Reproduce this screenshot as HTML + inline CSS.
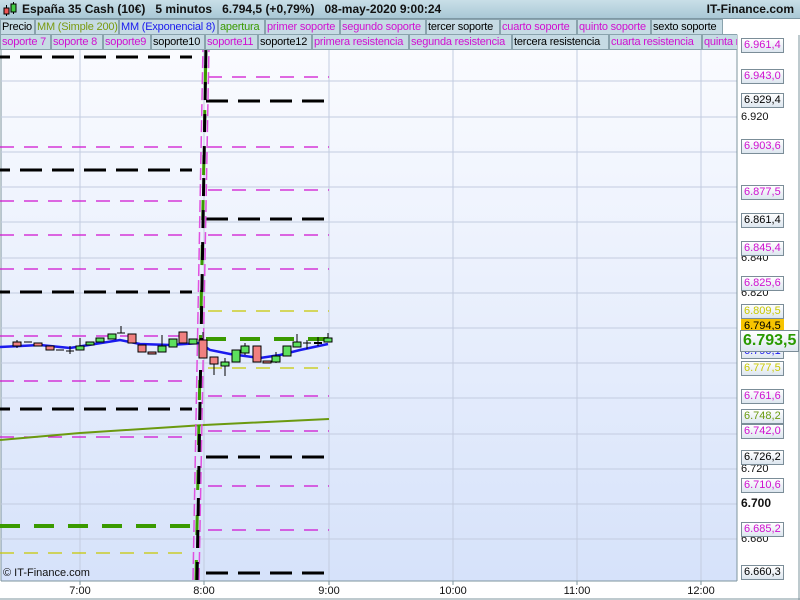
<!DOCTYPE html>
<html><head><meta charset="utf-8"><style>
*{margin:0;padding:0;box-sizing:border-box}
body{width:800px;height:600px;overflow:hidden;background:#fff;font-family:"Liberation Sans",sans-serif;position:relative}
#hdr{position:absolute;left:0;top:0;width:800px;height:19px;background:linear-gradient(#c9dfe8,#a9c8d6);border-bottom:1px solid #7e98a4;font-size:12px;font-weight:bold;color:#111}
.tabs{position:absolute;left:0;height:16px;font-size:11px;white-space:nowrap}
.tab{position:absolute;top:0;height:16px;background:#c6dbe4;border:1px solid #8aa3ad;line-height:14px;padding-left:1px;overflow:hidden;letter-spacing:-0.2px}
.lab{position:absolute;left:741px;font-size:11px;height:15px;line-height:13px;padding:0 2px;background:linear-gradient(#fff,#dde6ef);border:1px solid #7b8d98;white-space:nowrap}
.pl{position:absolute;left:741px;font-size:11px;height:14px;line-height:14px;color:#111}
.tm{position:absolute;top:585px;font-size:11px;color:#111;width:40px;text-align:center}
</style></head><body>
<div id="hdr">
<svg style="position:absolute;left:3px;top:2px" width="14" height="15"><line x1="3.5" y1="3" x2="3.5" y2="14" stroke="#000"/><rect x="1" y="6" width="5" height="6" fill="#e55" stroke="#000"/><line x1="10.5" y1="0" x2="10.5" y2="12" stroke="#000"/><rect x="8" y="2" width="5" height="8" fill="#4c4" stroke="#000"/></svg>
<span style="position:absolute;left:22px;top:2px">España 35 Cash (10€)&nbsp;&nbsp;&nbsp;5 minutos&nbsp;&nbsp;&nbsp;6.794,5 (+0,79%)&nbsp;&nbsp;&nbsp;08-may-2020 9:00:24</span>
<span style="position:absolute;right:6px;top:2px">IT-Finance.com</span>
</div>
<svg style="position:absolute;left:0;top:0" width="800" height="600">
<defs><linearGradient id="bg" x1="0" y1="0" x2="0" y2="1"><stop offset="0" stop-color="#fbfcff"/><stop offset="1" stop-color="#d6e2fa"/></linearGradient></defs>
<rect x="1" y="35" width="736" height="546" fill="url(#bg)" stroke="#7e949e"/>
<g stroke="#c3cce0" stroke-width="1">
<line x1="80" y1="35" x2="80" y2="581"/><line x1="204" y1="35" x2="204" y2="581"/><line x1="329" y1="35" x2="329" y2="581"/><line x1="453" y1="35" x2="453" y2="581"/><line x1="577" y1="35" x2="577" y2="581"/><line x1="701" y1="35" x2="701" y2="581"/>
<line x1="1" y1="46" x2="737" y2="46"/><line x1="1" y1="81" x2="737" y2="81"/><line x1="1" y1="117" x2="737" y2="117"/><line x1="1" y1="152" x2="737" y2="152"/><line x1="1" y1="187" x2="737" y2="187"/><line x1="1" y1="222" x2="737" y2="222"/><line x1="1" y1="258" x2="737" y2="258"/><line x1="1" y1="293" x2="737" y2="293"/><line x1="1" y1="328" x2="737" y2="328"/><line x1="1" y1="363" x2="737" y2="363"/><line x1="1" y1="398" x2="737" y2="398"/><line x1="1" y1="434" x2="737" y2="434"/><line x1="1" y1="469" x2="737" y2="469"/><line x1="1" y1="504" x2="737" y2="504"/><line x1="1" y1="539" x2="737" y2="539"/>
</g>
<g stroke="#d010d0" stroke-width="1.2" stroke-dasharray="14,10">
<line x1="0" y1="147" x2="192" y2="147"/><line x1="0" y1="201" x2="192" y2="201"/><line x1="0" y1="235" x2="192" y2="235"/><line x1="0" y1="269" x2="192" y2="269"/><line x1="0" y1="336" x2="192" y2="336"/><line x1="0" y1="381" x2="192" y2="381"/><line x1="0" y1="437" x2="192" y2="437"/>
<line x1="208" y1="77" x2="329" y2="77"/><line x1="208" y1="147" x2="329" y2="147"/><line x1="208" y1="190" x2="329" y2="190"/><line x1="208" y1="235" x2="329" y2="235"/><line x1="208" y1="269" x2="329" y2="269"/><line x1="208" y1="396" x2="329" y2="396"/><line x1="208" y1="431" x2="329" y2="431"/><line x1="208" y1="486" x2="329" y2="486"/><line x1="208" y1="530" x2="329" y2="530"/>
</g>
<g stroke="#c8c800" stroke-width="1.2" stroke-dasharray="14,10">
<line x1="0" y1="553" x2="192" y2="553"/><line x1="208" y1="311" x2="329" y2="311"/><line x1="208" y1="368" x2="329" y2="368"/>
</g>
<g stroke="#000" stroke-width="3" stroke-dasharray="22,10" stroke-dashoffset="12">
<line x1="0" y1="57" x2="192" y2="57"/><line x1="0" y1="170" x2="192" y2="170"/><line x1="0" y1="292" x2="192" y2="292"/><line x1="0" y1="409" x2="192" y2="409"/>
</g>
<g stroke="#000" stroke-width="3" stroke-dasharray="22,10">
<line x1="206" y1="101" x2="329" y2="101"/><line x1="206" y1="219" x2="329" y2="219"/><line x1="206" y1="457" x2="329" y2="457"/><line x1="206" y1="573" x2="329" y2="573"/>
</g>
<g stroke="#3a9a00" stroke-width="4" stroke-dasharray="20,14"><line x1="0" y1="526" x2="192" y2="526"/><line x1="206" y1="339" x2="329" y2="339"/></g>
<polyline points="0,440 80,433 204,425 329,419" fill="none" stroke="#6b9a10" stroke-width="2"/>
<g fill="none">
<line x1="193" y1="580" x2="203" y2="46" stroke="#e050e0" stroke-width="1.5" stroke-dasharray="12,4"/>
<line x1="199" y1="580" x2="209" y2="46" stroke="#e050e0" stroke-width="1.5" stroke-dasharray="12,4"/>
<line x1="196" y1="580" x2="206" y2="46" stroke="#3a9a00" stroke-width="3" stroke-dasharray="20,25"/>
<line x1="197" y1="580" x2="206" y2="46" stroke="#000" stroke-width="3" stroke-dasharray="18,14"/>
</g>
<polyline points="0,347 40,345 70,348 120,340 140,344 170,345 200,343 210,350 230,354 260,358 280,355 300,350 328,344" fill="none" stroke="#1a1aee" stroke-width="2.5"/>
<g stroke="#000" stroke-width="1">
<line x1="17" y1="340" x2="17" y2="348"/><rect x="13" y="342" width="8" height="4" fill="#f08080"/>
<line x1="24" y1="342" x2="32" y2="342"/>
<rect x="34" y="343" width="8" height="3" fill="#f08080"/>
<rect x="46" y="346" width="8" height="4" fill="#f08080"/>
<line x1="56" y1="350" x2="64" y2="350"/><line x1="66" y1="351" x2="74" y2="351"/><line x1="70" y1="346" x2="70" y2="354"/>
<rect x="76" y="346" width="8" height="4" fill="#5de05d"/><line x1="80" y1="338" x2="80" y2="346"/>
<rect x="86" y="342" width="8" height="3" fill="#5de05d"/>
<rect x="96" y="338" width="8" height="4" fill="#5de05d"/>
<rect x="108" y="334" width="8" height="5" fill="#5de05d"/>
<line x1="117" y1="333" x2="125" y2="333"/><line x1="121" y1="326" x2="121" y2="333"/>
<rect x="128" y="334" width="8" height="9" fill="#f08080"/>
<rect x="138" y="345" width="8" height="7" fill="#f08080"/>
<rect x="148" y="352" width="8" height="2" fill="#f08080"/>
<rect x="158" y="346" width="8" height="6" fill="#5de05d"/><line x1="162" y1="335" x2="162" y2="346"/>
<rect x="169" y="339" width="8" height="8" fill="#5de05d"/>
<rect x="179" y="332" width="8" height="11" fill="#f08080"/>
<rect x="189" y="339" width="8" height="5" fill="#5de05d"/>
<line x1="203" y1="332" x2="203" y2="358"/><rect x="199" y="340" width="8" height="18" fill="#f08080"/>
<line x1="214" y1="357" x2="214" y2="375"/><rect x="210" y="357" width="8" height="7" fill="#f08080"/>
<line x1="225" y1="358" x2="225" y2="376"/><rect x="221" y="362" width="8" height="4" fill="#5de05d"/>
<rect x="232" y="350" width="8" height="12" fill="#5de05d"/>
<line x1="245" y1="343" x2="245" y2="355"/><rect x="241" y="346" width="8" height="7" fill="#5de05d"/>
<rect x="253" y="346" width="8" height="16" fill="#f08080"/>
<rect x="263" y="361" width="8" height="2" fill="#f08080"/>
<line x1="276" y1="352" x2="276" y2="363"/><rect x="272" y="356" width="8" height="6" fill="#5de05d"/>
<rect x="283" y="346" width="8" height="10" fill="#5de05d"/>
<line x1="297" y1="334" x2="297" y2="347"/><rect x="293" y="342" width="8" height="5" fill="#5de05d"/>
<line x1="303" y1="343" x2="311" y2="343"/><line x1="307" y1="340" x2="307" y2="349"/>
<line x1="314" y1="343" x2="322" y2="343" stroke-width="2"/><line x1="318" y1="337" x2="318" y2="346"/>
<line x1="328" y1="333" x2="328" y2="342"/><rect x="324" y="338" width="8" height="4" fill="#5de05d"/>
</g>
<rect x="0" y="581" width="800" height="19" fill="#fff"/>
<line x1="737" y1="35" x2="737" y2="581" stroke="#7e949e"/>
<line x1="1" y1="581" x2="737" y2="581" stroke="#7e949e"/>
<line x1="799" y1="35" x2="799" y2="600" stroke="#7e949e"/>
<line x1="0" y1="599" x2="800" y2="599" stroke="#7e949e"/>
<g stroke="#7e949e"><line x1="80" y1="581" x2="80" y2="585"/><line x1="204" y1="581" x2="204" y2="585"/><line x1="329" y1="581" x2="329" y2="585"/><line x1="453" y1="581" x2="453" y2="585"/><line x1="577" y1="581" x2="577" y2="585"/><line x1="701" y1="581" x2="701" y2="585"/></g>
</svg>
<div style="position:absolute;left:3px;top:567px;font-size:11px;color:#111">© IT-Finance.com</div>
<div class="tm" style="left:60px">7:00</div><div class="tm" style="left:184px">8:00</div><div class="tm" style="left:309px">9:00</div><div class="tm" style="left:433px">10:00</div><div class="tm" style="left:557px">11:00</div><div class="tm" style="left:681px">12:00</div>
<div class="tabs" style="top:19px">
<div class="tab" style="left:0;width:35px">Precio</div>
<div class="tab" style="left:35px;width:84px;color:#7a9a10">MM (Simple 200)</div>
<div class="tab" style="left:119px;width:99px;color:#1a1aee">MM (Exponencial 8)</div>
<div class="tab" style="left:218px;width:47px;color:#3a9a00">apertura</div>
<div class="tab" style="left:265px;width:75px;color:#d010d0">primer soporte</div>
<div class="tab" style="left:340px;width:86px;color:#d010d0">segundo soporte</div>
<div class="tab" style="left:426px;width:74px">tercer soporte</div>
<div class="tab" style="left:500px;width:77px;color:#d010d0">cuarto soporte</div>
<div class="tab" style="left:577px;width:74px;color:#d010d0">quinto soporte</div>
<div class="tab" style="left:651px;width:72px">sexto soporte</div>
</div>
<div class="tabs" style="top:34px;width:737px;overflow:hidden">
<div class="tab" style="left:0;width:51px;color:#d010d0">soporte 7</div>
<div class="tab" style="left:51px;width:52px;color:#d010d0">soporte 8</div>
<div class="tab" style="left:103px;width:48px;color:#d010d0">soporte9</div>
<div class="tab" style="left:151px;width:54px">soporte10</div>
<div class="tab" style="left:205px;width:53px;color:#d010d0">soporte11</div>
<div class="tab" style="left:258px;width:54px">soporte12</div>
<div class="tab" style="left:312px;width:97px;color:#d010d0">primera resistencia</div>
<div class="tab" style="left:409px;width:103px;color:#d010d0">segunda resistencia</div>
<div class="tab" style="left:512px;width:97px">tercera resistencia</div>
<div class="tab" style="left:609px;width:93px;color:#d010d0">cuarta resistencia</div>
<div class="tab" style="left:702px;width:60px;color:#d010d0">quinta resistencia</div>
</div>
<div class="pl" style="top:110px">6.920</div>
<div class="pl" style="top:251px">6.840</div>
<div class="pl" style="top:286px">6.820</div>
<div class="pl" style="top:462px">6.720</div>
<div class="pl" style="top:496px;font-weight:bold;font-size:12px">6.700</div>
<div class="pl" style="top:532px">6.680</div>
<div class="lab" style="top:38px;color:#d010d0">6.961,4</div>
<div class="lab" style="top:69px;color:#d010d0">6.943,0</div>
<div class="lab" style="top:93px">6.929,4</div>
<div class="lab" style="top:139px;color:#d010d0">6.903,6</div>
<div class="lab" style="top:185px;color:#d010d0">6.877,5</div>
<div class="lab" style="top:213px">6.861,4</div>
<div class="lab" style="top:241px;color:#d010d0">6.845,4</div>
<div class="lab" style="top:276px;color:#d010d0">6.825,6</div>
<div class="lab" style="top:304px;color:#c8c800">6.809,5</div>
<div class="lab" style="top:319px;background:#f7c400;border-color:#f7c400">6.794,5</div>
<div class="lab" style="top:344px;color:#1a1aee">6.790,1</div>
<div class="lab" style="top:330px;height:22px;line-height:20px;font-size:16px;font-weight:bold;color:#2a9a00;left:740px">6.793,5</div>
<div class="lab" style="top:361px;color:#c8c800">6.777,5</div>
<div class="lab" style="top:389px;color:#d010d0">6.761,6</div>
<div class="lab" style="top:409px;color:#6b9a10">6.748,2</div>
<div class="lab" style="top:424px;color:#d010d0">6.742,0</div>
<div class="lab" style="top:450px">6.726,2</div>
<div class="lab" style="top:478px;color:#d010d0">6.710,6</div>
<div class="lab" style="top:522px;color:#d010d0">6.685,2</div>
<div class="lab" style="top:565px">6.660,3</div>
</body></html>
